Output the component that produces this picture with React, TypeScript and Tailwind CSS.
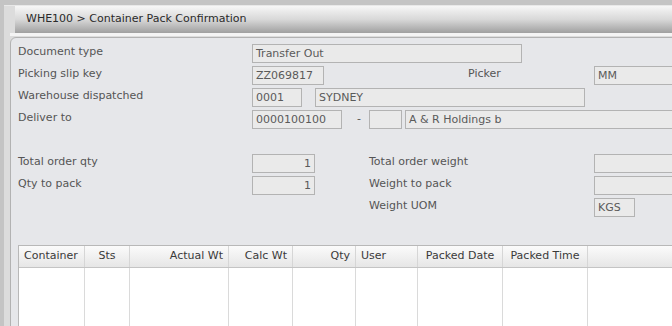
const labelCls = 'text-[#555]';
const boxCls =
  'h-[19px] border border-[#b3b3b3] bg-[#eaeaea] px-[3px] text-[#5a5a5a] leading-[17px] whitespace-nowrap overflow-hidden';

function Field({ w, value = '', right = false }: { w: number; value?: string; right?: boolean }) {
  return (
    <div className={boxCls + (right ? ' text-right' : '')} style={{ width: w }}>
      {value}
    </div>
  );
}

const columns = [
  { label: 'Container', w: 66, align: 'left' },
  { label: 'Sts', w: 45, align: 'center' },
  { label: 'Actual Wt', w: 99, align: 'right' },
  { label: 'Calc Wt', w: 64, align: 'right' },
  { label: 'Qty', w: 63, align: 'right' },
  { label: 'User', w: 62, align: 'left' },
  { label: 'Packed Date', w: 85, align: 'center' },
  { label: 'Packed Time', w: 85, align: 'center' },
];

export default function App() {
  return (
    <div
      className="w-[672px] h-[326px] overflow-hidden bg-[#c4c4c4] pt-[5px] pl-[4px] text-[11px]"
      style={{ fontFamily: '"DejaVu Sans", Verdana, sans-serif' }}
    >
      <div className="h-full bg-[#dcdcdc] border-t border-[#e8e8e8] pl-[6px]">
        {/* title bar */}
        <div className="ml-[5px] h-[27px] bg-gradient-to-b from-[#f7f7f7] via-[#d8d8d8] to-[#a0a0a0] flex items-center pl-[11px] text-[11px] text-[#2a2a2a]">
          WHE100 &gt; Container Pack Confirmation
        </div>
        <div className="h-[3px] bg-[#f4f4f4]" />

        {/* panel */}
        <div className="mt-[1px] w-[720px] h-[300px] rounded-tl-[6px] border border-[#b2b2b2] bg-[#e6e7ea] pl-[7px] pt-[6px]">
          <div className="flex flex-col gap-[3px]">
            <div className="flex items-center h-[19px]">
              <div className={'w-[234px] -mt-[2px] ' + labelCls}>Document type</div>
              <Field w={270} value="Transfer Out" />
            </div>
            <div className="flex items-center h-[19px]">
              <div className={'w-[234px] -mt-[2px] ' + labelCls}>Picking slip key</div>
              <Field w={72} value="ZZ069817" />
              <div className={'ml-[144px] w-[126px] -mt-[2px] ' + labelCls}>Picker</div>
              <Field w={110} value="MM" />
            </div>
            <div className="flex items-center h-[19px]">
              <div className={'w-[234px] -mt-[2px] ' + labelCls}>Warehouse dispatched</div>
              <Field w={50} value="0001" />
              <div className="ml-[13px]">
                <Field w={270} value="SYDNEY" />
              </div>
            </div>
            <div className="flex items-center h-[19px]">
              <div className={'w-[234px] -mt-[2px] ' + labelCls}>Deliver to</div>
              <Field w={90} value="0000100100" />
              <div className="w-[27px] pl-[15px] text-[#555]">-</div>
              <Field w={33} />
              <div className="ml-[3px]">
                <Field w={300} value="A & R Holdings b" />
              </div>
            </div>
          </div>

          <div className="mt-[25px] flex flex-col gap-[3px]">
            <div className="flex items-center h-[19px]">
              <div className={'w-[234px] -mt-[2px] ' + labelCls}>Total order qty</div>
              <Field w={63} value="1" right />
              <div className={'ml-[54px] w-[225px] -mt-[2px] ' + labelCls}>Total order weight</div>
              <Field w={110} />
            </div>
            <div className="flex items-center h-[19px]">
              <div className={'w-[234px] -mt-[2px] ' + labelCls}>Qty to pack</div>
              <Field w={63} value="1" right />
              <div className={'ml-[54px] w-[225px] -mt-[2px] ' + labelCls}>Weight to pack</div>
              <Field w={110} />
            </div>
            <div className="flex items-center h-[19px]">
              <div className="w-[351px]" />
              <div className={'w-[225px] -mt-[2px] ' + labelCls}>Weight UOM</div>
              <Field w={41} value="KGS" />
            </div>
          </div>

          {/* grid */}
          <div className="mt-[28px] w-[700px] h-[100px] border-t border-l border-[#b8b8b8] bg-white flex flex-col">
            <div className="flex h-[22px] bg-gradient-to-b from-[#fbfbfb] to-[#e6e6e6] border-b border-[#c4c4c4] text-[#3a3a3a]">
              {columns.map((c) => (
                <div
                  key={c.label}
                  className={
                    'h-full flex items-center px-[5px] border-r border-[#d6d6d6] ' +
                    (c.align === 'right' ? 'justify-end' : c.align === 'center' ? 'justify-center' : 'justify-start')
                  }
                  style={{ width: c.w }}
                >
                  {c.label}
                </div>
              ))}
            </div>
            <div className="flex flex-1">
              {columns.map((c) => (
                <div key={c.label} className="h-full border-r border-[#dadada]" style={{ width: c.w }} />
              ))}
            </div>
          </div>
        </div>
      </div>
    </div>
  );
}
